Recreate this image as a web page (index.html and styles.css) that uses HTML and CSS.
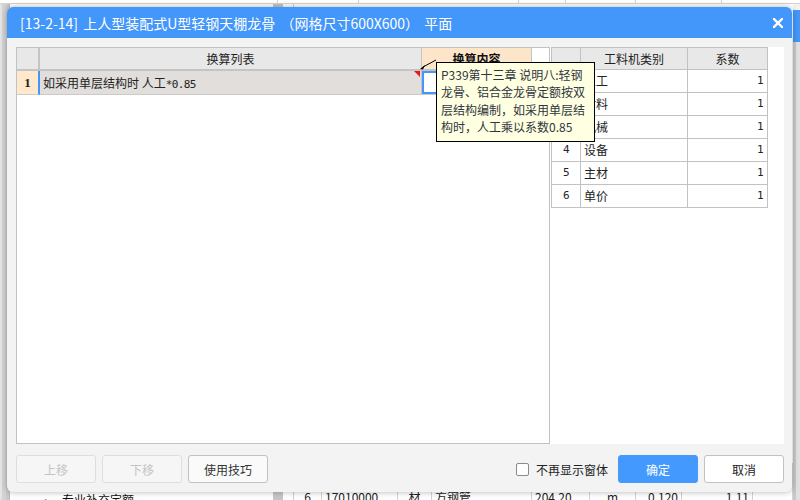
FILE: index.html
```html
<!DOCTYPE html>
<html lang="zh-CN">
<head>
<meta charset="utf-8">
<title>换算</title>
<link rel="stylesheet" href="styles.css">
</head>
<body>
<div class="app">
  <div class="app-top">
    <span class="tc w278"></span><span class="tc w81"></span><span class="tc w160"></span><span class="tc w47"></span><span class="tc w70"></span><span class="tc w86"></span>
  </div>
  <div class="app-main">
    <div class="app-edge"></div>
    <div class="app-tree">
      <div class="tree-list">
        <div class="tree-item"><span class="tree-caret">▸</span>专业补充定额</div>
      </div>
      <div class="tree-scroll"></div>
    </div>
    <div class="app-table">
      <div class="trow">
        <div class="td c">5</div><div class="td">17010000</div><div class="td c">材</div><div class="td">方钢管</div><div class="td">204.20</div><div class="td c">m</div><div class="td r">0.120</div><div class="td r">1.11</div><div class="td"></div>
      </div>
      <div class="trow last">
        <div class="td c">6</div><div class="td">17010000</div><div class="td c">材</div><div class="td">方钢管</div><div class="td">204.20</div><div class="td c">m</div><div class="td r">0.120</div><div class="td r">1.11</div><div class="td"></div>
      </div>
    </div>
    <div class="app-side"></div>
  </div>
</div>

<div class="dialog">
  <div class="dlg-title">
    <span class="dlg-title-text">[13-2-14] 上人型装配式U型轻钢天棚龙骨 （网格尺寸600X600） 平面</span>
    <svg class="dlg-close" viewBox="0 0 10 10" width="10" height="10"><path d="M1 1 L9 9 M9 1 L1 9" stroke="#fff" stroke-width="2.4" stroke-linecap="square" fill="none"/></svg>
  </div>
  <div class="dlg-body">
    <div class="panes">
      <div class="pane-left">
        <div class="lgrid">
          <div class="lrow lhead">
            <div class="lc lc-num"></div>
            <div class="lc lc-list">换算列表</div>
            <div class="lc lc-content">换算内容</div>
            <div class="lc lc-blank"></div>
          </div>
          <div class="lrow lbody">
            <div class="lc lc-num sel">1</div>
            <div class="lc lc-list cur">如采用单层结构时 人工<span class="mono">*0.85</span><span class="note-mark"></span></div>
            <div class="lc lc-content edit"></div>
            <div class="lc lc-blank"></div>
          </div>
        </div>
        <svg class="tip-arrow" viewBox="0 0 20 16" width="20" height="16"><path d="M19 4 L6 11" stroke="#000" stroke-width="1" fill="none"/><polygon points="3,13 8,9 6,13.5" fill="#000"/></svg>
        <div class="tooltip">P339第十三章 说明八:轻钢<br>龙骨、铝合金龙骨定额按双<br>层结构编制，如采用单层结<br>构时，人工乘以系数0.85</div>
      </div>
      <div class="pane-right">
        <div class="rgrid">
          <div class="rrow rhead"><div class="rc"></div><div class="rc c">工料机类别</div><div class="rc c">系数</div></div>
          <div class="rrow"><div class="rc c mono">1</div><div class="rc">人工</div><div class="rc r mono">1</div></div>
          <div class="rrow"><div class="rc c mono">2</div><div class="rc">材料</div><div class="rc r mono">1</div></div>
          <div class="rrow"><div class="rc c mono">3</div><div class="rc">机械</div><div class="rc r mono">1</div></div>
          <div class="rrow"><div class="rc c mono">4</div><div class="rc">设备</div><div class="rc r mono">1</div></div>
          <div class="rrow"><div class="rc c mono">5</div><div class="rc">主材</div><div class="rc r mono">1</div></div>
          <div class="rrow"><div class="rc c mono">6</div><div class="rc">单价</div><div class="rc r mono">1</div></div>
        </div>
      </div>
    </div>
    <div class="dlg-foot">
      <button class="btn disabled">上移</button>
      <button class="btn disabled">下移</button>
      <button class="btn">使用技巧</button>
      <div class="foot-spacer"></div>
      <label class="check"><span class="check-box"></span><span class="check-text">不再显示窗体</span></label>
      <button class="btn primary">确定</button>
      <button class="btn plain">取消</button>
    </div>
  </div>
</div>
</body>
</html>
```
FILE: styles.css
```css
* { box-sizing: border-box; }
html, body { margin: 0; padding: 0; }
body {
  width: 800px; height: 500px; overflow: hidden; position: relative;
  font-family: "Noto Sans CJK SC", "Noto Sans", sans-serif;
  font-size: 12px; color: #222; background: #fff;
}

/* background application */
.app { display: flex; flex-direction: column; height: 500px; }
.app-top { height: 4px; flex: none; display: flex; border-bottom: 1px solid #d4d4d4; }
.tc { border-right: 1px solid #d4d4d4; }
.w278 { width: 278px; } .w81 { width: 81px; } .w160 { width: 160px; }
.w47 { width: 47px; } .w70 { width: 70px; } .w86 { width: 86px; }
.app-main { flex: 1; display: flex; min-height: 0; }
.app-edge {
  width: 10px; flex: none;
  background: linear-gradient(to right, #e4e4e4 0 2px, #d3d3d3 2px 6px, #c9c9c9 6px 9px, #b9b9b9 9px);
}
.app-tree { width: 273px; flex: none; display: flex; }
.tree-list { flex: 1; display: flex; flex-direction: column; justify-content: flex-end; }
.tree-item { height: 24px; line-height: 24px; margin-bottom: -12px; padding-left: 35px; color: #111; }
.tree-caret { display: inline-block; width: 17px; color: #555; font-size: 12px; }
.tree-scroll { width: 10px; background: #c6c6c6; }
.app-table { flex: 1; margin-left: 10px; border-left: 1px solid #cfcfcf; display: flex; flex-direction: column; justify-content: flex-end; }
.trow {
  flex: none; height: 23px; display: grid;
  grid-template-columns: 28px 76px 34px 100px 58px 46px 46px 71px 1fr;
  border-bottom: 1px solid #dcdcdc;
}
.trow.last { margin-bottom: -9px; }
.td { border-right: 1px solid #d4d4d4; line-height: 22px; padding: 0 3px; white-space: nowrap; overflow: hidden; color: #222; }
.td.c { text-align: center; }
.td.r { text-align: right; }
.app-side {
  width: 7px; flex: none;
  background: linear-gradient(to bottom, #f2f2f2 0 6px, #4396fa 6px 38px, transparent 38px),
              linear-gradient(to right, #c8c8c8 0 3px, #e0e0e0 3px);
}

/* dialog */
.dialog {
  position: absolute; left: 7px; top: 7px; width: 785px; height: 485px;
  background: #f3f3f3; border-radius: 6px; overflow: hidden;
  box-shadow: 0 0 6px rgba(0, 0, 0, 0.3);
  display: flex; flex-direction: column;
}
.dlg-title {
  height: 31px; flex: none; background: #4396fa; color: #fff;
  display: flex; align-items: center; padding: 0 9px 0 13px; font-size: 14px;
}
.dlg-title-text { flex: 1; white-space: nowrap; word-spacing: 2px; }
.dlg-close { display: block; }
.dlg-body { flex: 1; display: flex; flex-direction: column; padding: 9px 8px 9px 9px; }
.panes { display: flex; height: 397px; flex: none; }
.pane-left { position: relative; width: 534px; flex: none; background: #fff; border: 1px solid #c2c2c2; }
.pane-right { flex: 1; background: #fff; padding-left: 1px; }

/* left grid */
.lrow { display: flex; }
.lhead { height: 23px; }
.lbody { height: 24px; }
.lc { height: 100%; white-space: nowrap; }
.lhead .lc { border-bottom: 2px solid #c4c4c4; }
.lbody .lc { border-bottom: 1px solid #cacaca; }
.lc-num { width: 23px; border-right: 2px solid #c4c4c4; text-align: center; }
.lhead .lc-num { background: #e8e8e8; }
.lc-num.sel {
  background: #ffe8cc; border-right-color: #4396fa;
  font-family: "Liberation Serif", serif; font-weight: bold; font-size: 13px; line-height: 23px;
}
.lc-list { width: 382px; border-right: 1px solid #c4c4c4; }
.lhead .lc-list { background: #e8e8e8; text-align: center; line-height: 21px; color: #222; }
.lc-list.cur { background: #e1dedb; position: relative; padding-left: 3px; line-height: 23px; color: #222; }
.lc-content { width: 110px; border-right: 1px solid #c4c4c4; }
.lhead .lc-content { background: #fde5c9; text-align: center; line-height: 21px; font-weight: bold; color: #111; }
.lc-content.edit { box-shadow: inset 0 0 0 2px #4396fa; }
.lc-blank { flex: 1; }
.lhead .lc-blank, .lbody .lc-blank { border-bottom: none; }
.mono { font-family: "DejaVu Sans Mono", "Liberation Mono", monospace; font-size: 11px; letter-spacing: -0.6px; }
.note-mark {
  position: absolute; right: 1px; top: 0; width: 6px; height: 6px;
  background: #e81818; clip-path: polygon(0 0, 100% 0, 100% 100%);
}
.tip-arrow { position: absolute; left: 400px; top: 8px; }
.tooltip {
  position: absolute; left: 419px; top: 14px; width: 159px; height: 80px;
  background: #ffffe1; border: 1px solid #000; padding: 3px 4px;
  line-height: 17.4px; color: #2e3640; white-space: nowrap; z-index: 2;
}

/* right grid */
.rgrid { width: 217px; border-left: 1px solid #c2c2c2; border-top: 1px solid #c2c2c2; }
.rrow { display: grid; grid-template-columns: 29px 107px 80px; height: 23px; }
.rhead { height: 22px; }
.rc { border-right: 1px solid #c2c2c2; border-bottom: 1px solid #c2c2c2; line-height: 22px; padding: 0 3px; white-space: nowrap; }
.rhead .rc { background: #e8e8e8; line-height: 21px; }
.rc.c { text-align: center; }
.rc.r { text-align: right; padding-right: 4px; }
.rc.mono { font-size: 11px; }

/* footer */
.dlg-foot { display: flex; align-items: center; gap: 6px; margin-top: 11px; height: 28px; }
.btn {
  width: 80px; height: 28px; border: 1px solid #c2c2c2; border-radius: 3px;
  background: #fafafa; color: #333; padding: 0;
  font-family: "Noto Sans CJK SC", "Noto Sans", sans-serif; font-size: 12px;
}
.btn.disabled { color: #c4c4c4; border-color: #dedede; background: #f6f6f6; }
.btn.primary { background: #4499ff; border-color: #4499ff; color: #fff; }
.btn.plain { background: #fff; color: #222; }
.foot-spacer { flex: 1; }
.check { display: flex; align-items: center; gap: 7px; margin-right: 4px; color: #222; }
.check-box { width: 13px; height: 13px; flex: none; border: 1px solid #8a8a8a; border-radius: 2px; background: #fff; }
.check-text { white-space: nowrap; }
```
